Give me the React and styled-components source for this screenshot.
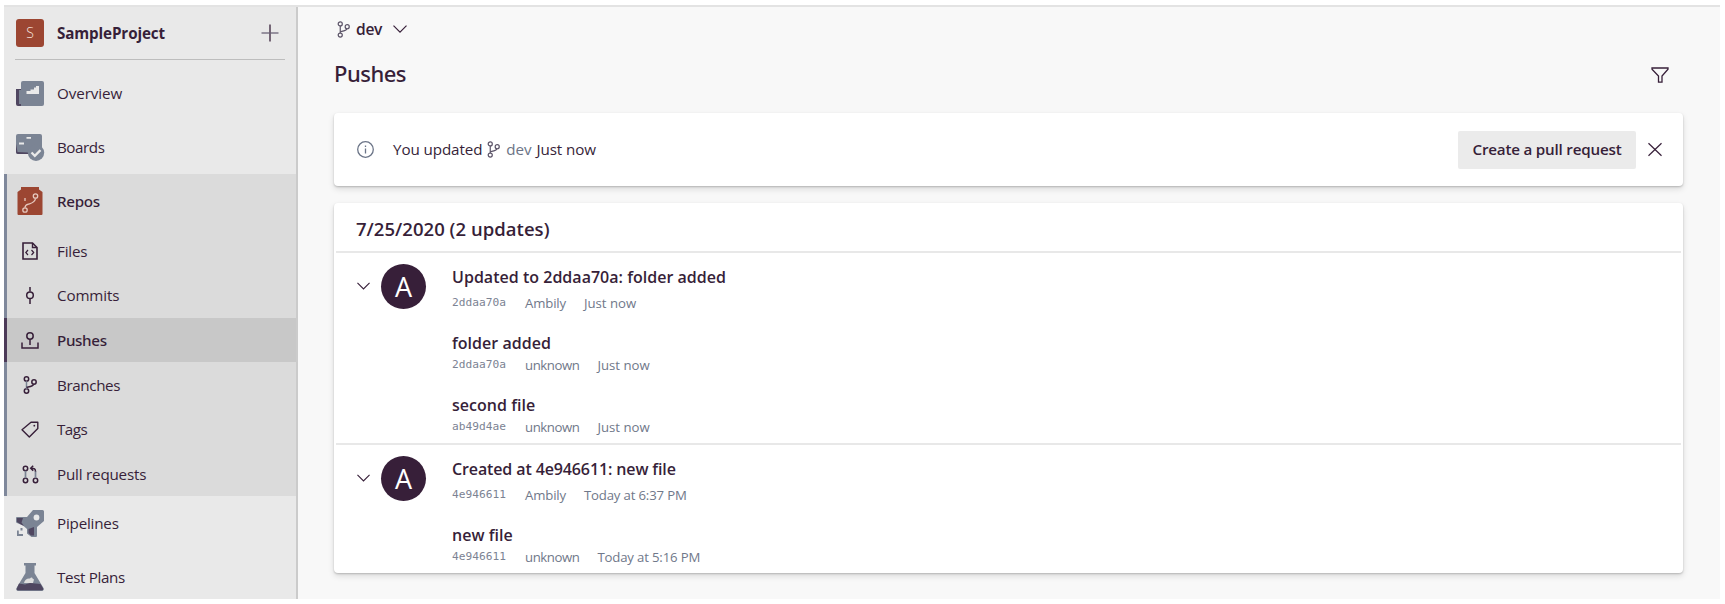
import React from "react";
import styled, { createGlobalStyle } from "styled-components";

const ink = "#371f39";
const slate = "#7b8494";
const rust = "#9c4632";

const GlobalStyle = createGlobalStyle`
  *, *::before, *::after { box-sizing: border-box; }
  body {
    margin: 0;
    background: #fff;
    color: ${ink};
    font-family: "Open Sans", "Noto Sans", sans-serif;
    font-size: 15.2px;
  }
  svg { display: block; flex: none; overflow: visible; }
`;

/* ---------- Frame ---------- */

const Page = styled.div`
  width: 1725px;
  height: 604px;
  padding: 5px 5px 5px 4px;
  overflow: hidden;
`;

const Window = styled.div`
  display: flex;
  height: 594px;
  border-top: 2px solid #e3e3e3;
  background: #f8f8f8;
  overflow: hidden;
`;

/* ---------- Sidebar ---------- */

const Sidebar = styled.nav`
  flex: none;
  width: 294px;
  height: 592px;
  background: #e9e9e9;
  border-right: 2px solid #cbcbcb;
  overflow: hidden;
`;

const ProjectHeader = styled.div`
  display: flex;
  align-items: center;
  height: 53px;
  margin: 0 11px;
  padding-right: 6px;
  border-bottom: 1px solid #bdbdbd;
`;

const ProjectBadge = styled.div`
  width: 28px;
  height: 28px;
  margin: 0 13px 0 1px;
  border-radius: 3px;
  background: ${rust};
  color: #f6e3dd;
  font-size: 14px;
  font-weight: 300;
  line-height: 28px;
  text-align: center;
`;

const ProjectName = styled.span`
  flex: 1;
  font-weight: 700;
  letter-spacing: -0.12px;
`;

const NavList = styled.div`
  padding-top: 6px;
`;

const NavRow = styled.div`
  display: flex;
  align-items: center;
  height: ${(p) => (p.$sub ? "44.7px" : "54px")};
  padding-left: ${(p) => (p.$inGroup ? "8px" : "11px")};
  background: ${(p) => (p.$selected ? "#c8c8c8" : "transparent")};
  box-shadow: ${(p) => (p.$selected ? `-3px 0 0 #4c3a58` : "none")};
`;

const NavIcon = styled.div`
  display: flex;
  justify-content: center;
  width: 30px;
  margin-right: 12px;
`;

const NavLabel = styled.span`
  white-space: nowrap;
  font-family: ${(p) => (p.$strong ? `"Noto Sans"` : `"Open Sans"`)}, sans-serif;
  font-weight: ${(p) => (p.$strong ? 500 : 400)};
  letter-spacing: ${(p) => p.$ls}px;
`;

const NavGroup = styled.div`
  margin-top: -0.5px;
  background: #dbdbdb;
  border-left: 3px solid #7f889b;
`;

const SubList = styled.div`
  padding-top: 0.8px;
`;

/* ---------- Main ---------- */

const Main = styled.main`
  flex: 1;
  padding: 0 37px 0 36px;
`;

const BranchPicker = styled.div`
  display: flex;
  align-items: center;
  height: 44px;
  padding-left: 3px;
`;

const BranchName = styled.span`
  margin: 0 11px 0 6px;
  font-size: 15.6px;
  font-weight: 600;
  letter-spacing: -0.3px;
`;

const TitleBar = styled.div`
  display: flex;
  align-items: center;
  justify-content: space-between;
  height: 44px;
  padding-right: 14px;
`;

const PageTitle = styled.h1`
  margin: 0;
  font: 500 22px/30px "Noto Sans", sans-serif;
  letter-spacing: -0.5px;
`;

const FilterButton = styled.div`
  padding-top: 4px;
`;

const Card = styled.section`
  background: #fff;
  border-radius: 4px;
  box-shadow: 0 3px 6px rgba(0, 0, 0, 0.12), 0 1px 2px rgba(0, 0, 0, 0.2);
`;

const Notice = styled(Card)`
  display: flex;
  align-items: center;
  height: 73px;
  margin: 18px 0 17px;
  padding: 0 21px 0 22.5px;
`;

const NoticeText = styled.div`
  display: flex;
  flex: 1;
  align-items: center;
  margin-left: 19.5px;
  padding-bottom: 1px;
  letter-spacing: -0.1px;
`;

const BranchLink = styled.span`
  display: flex;
  align-items: center;
  gap: 6px;
  margin: 0 5px;
  color: #6c7486;
`;

const ActionButton = styled.button`
  width: 178px;
  height: 38px;
  margin-right: 12px;
  padding: 0 0 1px;
  border: 0;
  border-radius: 2px;
  background: #ebebeb;
  color: ${ink};
  font: 600 15.2px "Open Sans", sans-serif;
  letter-spacing: -0.21px;
`;

const GroupHeader = styled.h2`
  height: 48px;
  margin: 0;
  padding: 2px 0 0 22px;
  font-size: 18.5px;
  font-weight: 600;
  line-height: 48px;
  letter-spacing: 0.03px;
`;

const Push = styled.article`
  display: flex;
  padding: 11.5px 0 6.7px 21px;
  margin: 0 2px;
  border-top: 2px solid #e8e8e8;
`;

const Toggle = styled.div`
  width: 26px;
  padding-top: 17px;
`;

const Avatar = styled.div`
  width: 45px;
  height: 45px;
  margin: -1px 26px 0 -2px;
  border-radius: 50%;
  background: ${ink};
  color: #fff;
  font: 400 27px/45px "Open Sans", sans-serif;
  text-align: center;
`;

const Entries = styled.div`
  display: grid;
  gap: 18px;
`;

const Entry = styled.div`
  display: grid;
  row-gap: ${(p) => (p.$lead ? "4px" : "0")};
`;

const EntryTitle = styled.div`
  font-size: 16px;
  font-weight: 600;
  line-height: 24px;
  letter-spacing: ${(p) => p.$ls || 0.02}px;
  white-space: nowrap;
`;

const Meta = styled.div`
  display: flex;
  gap: 18px;
  color: #70788a;
  font-size: 13.2px;
  line-height: 20px;
  white-space: nowrap;
`;

const Hash = styled.span`
  width: 55px;
  color: #7c8393;
  font: 11.2px/20px "DejaVu Sans Mono", monospace;
`;

const Author = styled.span`
  letter-spacing: ${(p) => (p.$unknown ? "-0.43px" : "-0.16px")};
`;

const When = styled.span`
  letter-spacing: ${(p) => (p.$long ? "-0.17px" : "0")};
`;

/* ---------- Icons ---------- */

const Line = ({ w, h, vb, color = ink, sw = 1.4, children }) => (
  <svg width={w} height={h} viewBox={vb || `0 0 ${w} ${h}`} fill="none" stroke={color} strokeWidth={sw}>
    {children}
  </svg>
);

const PlusIcon = () => (
  <Line w={18} h={18} sw={1.3}>
    <path d="M9 0.5v17" />
    <path d="M0.5 9h17" stroke="#6b6478" />
  </Line>
);

const OverviewIcon = () => (
  <svg width="28" height="25" viewBox="0 0 28 25">
    <path d="M0 8h5v12h20v5H2a2 2 0 0 1-2-2z" fill="#4f4660" />
    <path d="M3 9h3v14H3z" fill={slate} />
    <path d="M7 0h19a2 2 0 0 1 2 2v21a2 2 0 0 1-2 2H5V2a2 2 0 0 1 2-2z" fill={slate} />
    <path d="M10.500 10h4V8.500h3.500V6.500h2V5h3v8H10.500z" fill="#e9e9e9" />
  </svg>
);

const BoardsIcon = () => (
  <svg width="28" height="27" viewBox="0 0 28 27">
    <path d="M2 0h22a2 2 0 0 1 2 2v18H2a2 2 0 0 1-2-2V2a2 2 0 0 1 2-2z" fill={slate} />
    <path d="M0 10v8a2 2 0 0 0 2 2h10v-1.500L1.500 18z" fill="#4f4660" />
    <path d="M3 8.500h5v2H3zM10.500 3h4.500v1.700h-4.500z" fill="#e9e9e9" />
    <circle cx="20" cy="18.700" r="8.200" fill={slate} />
    <path d="M15.500 18.500l3.300 3.300 5.700-5.700" fill="none" stroke="#e9e9e9" strokeWidth="2.300" />
  </svg>
);

const ReposIcon = () => (
  <svg width="26" height="28" viewBox="0 0 26 28">
    <path d="M4 0h18v2.500l3.500 2.500v22a1 1 0 0 1-1 1h-23a1 1 0 0 1-1-1V5L4 2.500z" fill={rust} />
    <g fill="none" stroke="#e6c9bf" strokeWidth="1.300">
      <circle cx="18.500" cy="9" r="2.200" />
      <circle cx="8" cy="23" r="2.200" />
      <path d="M8 11v3M8 20.500c0-3 2-3 4.500-3.700S18 15 18.500 11.500" />
    </g>
  </svg>
);

const FilesIcon = () => (
  <Line w={16} h={18}>
    <path d="M1 1h9.500L15 5.500V17H1z" strokeWidth="1.600" />
    <path d="M10.500 1v4.500H15" />
    <path d="M6 8L3.800 10.500 6 13M9.500 8l2.200 2.500L9.500 13" strokeWidth="1.200" />
  </Line>
);

const CommitsIcon = () => (
  <Line w={10} h={17} sw={1.5}>
    <path d="M5 0v4.500M5 12V17" />
    <circle cx="5" cy="8.300" r="3.300" />
  </Line>
);

const PushesIcon = () => (
  <Line w={18} h={17} sw={1.5}>
    <circle cx="9" cy="4" r="3.200" />
    <path d="M9 7.200V13M1 10.500V16h16v-5.500" />
  </Line>
);

const BranchIcon = ({ w = 14, h = 18, sw = 1.5, color, shaft }) => (
  <Line w={w} h={h} vb="0 0 14 18" sw={sw} color={color}>
    <circle cx="3.500" cy="3" r="2.200" />
    <circle cx="3.500" cy="15" r="2.200" />
    <circle cx="11" cy="6" r="2.200" />
    <path d="M3.500 5.200v7.600" stroke={shaft} />
    <path d="M10.700 8.200c-.7 2.300-3 2.300-7.200 3" />
  </Line>
);

const TagsIcon = () => (
  <Line w={18} h={17}>
    <path d="M10 1.200h6.800v6.300L8.300 16 1 8.700z" strokeLinejoin="round" />
    <circle cx="13.300" cy="4.700" r="0.900" fill={ink} stroke="none" />
  </Line>
);

const PullRequestIcon = () => (
  <Line w={17} h={19} sw={1.5}>
    <circle cx="3.500" cy="3.500" r="2.200" />
    <circle cx="3.500" cy="15.500" r="2.200" />
    <circle cx="13.500" cy="15.500" r="2.200" />
    <path d="M3.500 5.700v7.600M13.500 13.300V6" stroke={slate} strokeWidth="1.700" />
    <path d="M13.500 6.500c0-2.500-1-3.200-4.500-3.200M11.200.8L8.700 3.300l2.500 2.500" />
  </Line>
);

const PipelinesIcon = () => (
  <svg width="28" height="27" viewBox="0 0 28 27">
    <path d="M17 0h9.500A1.500 1.500 0 0 1 28 1.500V11l-7 6v9a1 1 0 0 1-1 1h-4.500L11 23.500V19l-4-3.500-6-2.500a1.500 1.500 0 0 1-1-1.500V8a1 1 0 0 1 1-1h10z" fill={slate} />
    <path d="M1 8h6l-1.500 4.500L8 16l-3-1.500L1 12zM12.500 19l5.500-2v8.500h-3L12.500 23z" fill="#4f4660" />
    <circle cx="20.500" cy="7.500" r="2.900" fill="#e9e9e9" />
    <path d="M1 20.500h1.800V24H7v2H1zM4.500 18h2v2.500h-2z" fill={slate} />
  </svg>
);

const TestPlansIcon = () => (
  <svg width="28" height="28" viewBox="0 0 28 28">
    <path d="M8 0h12v2.500h-1.500V10L27.500 25c.7 1.500 0 3-1.700 3H2.200c-1.700 0-2.400-1.500-1.700-3L9.500 10V2.500H8z" fill={slate} />
    <path d="M3 20.500l6 1 5-1.500 10.500 1 2.700 4.500c.4 1-.2 1.800-1.400 1.800H2.200c-1.200 0-1.800-.8-1.400-1.800z" fill="#4f4660" />
    <path d="M8 20c.5-3 3-5 6-4.500 1-1.500 2.500-1 2.500 0l1.500 1-1 3.500z" fill="#dedede" />
  </svg>
);

const ChevronIcon = ({ w = 14, h = 8 }) => (
  <Line w={w} h={h} vb="0 0 14 8" sw={1.2}>
    <path d="M0.500 0.700L7 7.200l6.500-6.500" />
  </Line>
);

const FilterIcon = () => (
  <Line w={18} h={16} sw={1.3}>
    <path d="M1 1h16v1.200L11 9v6.200H7.500V9L1 2.200z" />
  </Line>
);

const InfoIcon = () => (
  <Line w={17} h={17} color="#6b7487" sw={1.3}>
    <circle cx="8.500" cy="8.500" r="7.800" />
    <path d="M8.500 7.500V12.500M8.500 4.500v1.500" />
  </Line>
);

const CloseIcon = () => (
  <Line w={14} h={13} sw={1.2}>
    <path d="M0.500 0.300l13 12.400" />
    <path d="M13.500 0.300L0.500 12.700" />
  </Line>
);

/* ---------- Data ---------- */

const topItems = [
  { label: "Overview", icon: <OverviewIcon />, ls: -0.1 },
  { label: "Boards", icon: <BoardsIcon />, ls: -0.45 },
];

const repoItems = [
  { label: "Files", icon: <FilesIcon />, ls: -0.2 },
  { label: "Commits", icon: <CommitsIcon />, ls: -0.15 },
  { label: "Pushes", icon: <PushesIcon />, ls: -0.35, strong: true, selected: true },
  { label: "Branches", icon: <BranchIcon shaft={slate} />, ls: -0.38 },
  { label: "Tags", icon: <TagsIcon />, ls: -0.5 },
  { label: "Pull requests", icon: <PullRequestIcon />, ls: -0.2 },
];

const bottomItems = [
  { label: "Pipelines", icon: <PipelinesIcon />, ls: -0.2 },
  { label: "Test Plans", icon: <TestPlansIcon />, ls: -0.35 },
];

const pushes = [
  [
    { title: "Updated to 2ddaa70a: folder added", hash: "2ddaa70a", author: "Ambily", when: "Just now" },
    { title: "folder added", hash: "2ddaa70a", author: "unknown", when: "Just now" },
    { title: "second file", hash: "ab49d4ae", author: "unknown", when: "Just now" },
  ],
  [
    { title: "Created at 4e946611: new file", hash: "4e946611", author: "Ambily", when: "Today at 6:37 PM", ls: -0.12 },
    { title: "new file", hash: "4e946611", author: "unknown", when: "Today at 5:16 PM" },
  ],
];

const NavItem = ({ item, sub, inGroup }) => (
  <NavRow $sub={sub} $inGroup={inGroup} $selected={item.selected}>
    <NavIcon>{item.icon}</NavIcon>
    <NavLabel $ls={item.ls} $strong={item.strong}>{item.label}</NavLabel>
  </NavRow>
);

export default function App() {
  return (
    <>
      <GlobalStyle />
      <Page>
        <Window>
          <Sidebar>
            <ProjectHeader>
              <ProjectBadge>S</ProjectBadge>
              <ProjectName>SampleProject</ProjectName>
              <PlusIcon />
            </ProjectHeader>
            <NavList>
              {topItems.map((item) => <NavItem key={item.label} item={item} />)}
              <NavGroup>
                <NavItem inGroup item={{ label: "Repos", icon: <ReposIcon />, ls: -0.3, strong: true }} />
                <SubList>
                  {repoItems.map((item) => <NavItem key={item.label} item={item} sub inGroup />)}
                </SubList>
              </NavGroup>
              {bottomItems.map((item) => <NavItem key={item.label} item={item} />)}
            </NavList>
          </Sidebar>
          <Main>
            <BranchPicker>
              <BranchIcon w={13} h={17} sw={1.3} color="#5c5468" />
              <BranchName>dev</BranchName>
              <ChevronIcon />
            </BranchPicker>
            <TitleBar>
              <PageTitle>Pushes</PageTitle>
              <FilterButton><FilterIcon /></FilterButton>
            </TitleBar>
            <Notice>
              <InfoIcon />
              <NoticeText>
                <span>You updated</span>
                <BranchLink>
                  <BranchIcon w={13} h={17} sw={1.3} color="#5c5468" />
                  dev
                </BranchLink>
                <span>Just now</span>
              </NoticeText>
              <ActionButton>Create a pull request</ActionButton>
              <CloseIcon />
            </Notice>
            <Card>
              <GroupHeader>7/25/2020 (2 updates)</GroupHeader>
              {pushes.map((entries) => (
                <Push key={entries[0].title}>
                  <Toggle><ChevronIcon w={13} h={8} /></Toggle>
                  <Avatar>A</Avatar>
                  <Entries>
                    {entries.map((e, i) => (
                      <Entry key={e.title} $lead={i === 0}>
                        <EntryTitle $ls={e.ls}>{e.title}</EntryTitle>
                        <Meta>
                          <Hash>{e.hash}</Hash>
                          <Author $unknown={e.author === "unknown"}>{e.author}</Author>
                          <When $long={e.when.length > 8}>{e.when}</When>
                        </Meta>
                      </Entry>
                    ))}
                  </Entries>
                </Push>
              ))}
            </Card>
          </Main>
        </Window>
      </Page>
    </>
  );
}
